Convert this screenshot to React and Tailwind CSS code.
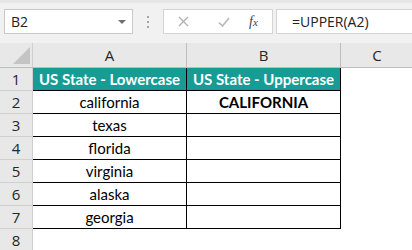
const states = ['california', 'texas', 'florida', 'virginia', 'alaska', 'georgia'];

const RowHead = ({ n }) => (
  <div className="w-[33px] h-[23px] shrink-0 flex items-center justify-center bg-[#e8e8e8] border-r border-b border-[#cfcfcf] text-[15px] text-[#262626] font-['Open_Sans',sans-serif]">
    {n}
  </div>
);

const Toolbar = () => (
  <div className="h-[43px] bg-[#f1f1f1] border-t-[3px] border-[#e6e6e6] flex items-start pt-[6px]">
    <div className="ml-[4px] w-[129px] h-[25px] bg-white border border-[#c8c8c8] flex items-center justify-between pl-[6px] pr-[6px]">
      <span className="text-[14px] text-[#222] font-['Open_Sans',sans-serif]">B2</span>
      <svg width="8" height="4" viewBox="0 0 8 4"><path d="M0 0h8L4 4z" fill="#707070" /></svg>
    </div>
    <div className="w-[30px] h-[25px] flex flex-col items-center justify-center gap-[3px]">
      <span className="w-[2px] h-[2px] bg-[#a5a5a5]" />
      <span className="w-[2px] h-[2px] bg-[#a5a5a5]" />
      <span className="w-[2px] h-[2px] bg-[#a5a5a5]" />
    </div>
    <div className="w-[110px] h-[25px] bg-white border border-[#d4d4d4] flex items-center">
      <svg className="ml-[14px]" width="11" height="11" viewBox="0 0 11 11">
        <path d="M1 1l9 9M10 1l-9 9" stroke="#b0b0b0" strokeWidth="1.3" />
      </svg>
      <svg className="ml-[29px]" width="12" height="10" viewBox="0 0 12 10">
        <path d="M1 5.5l3.5 3.5L11 1" stroke="#b8b8b8" strokeWidth="1.6" fill="none" />
      </svg>
      <span className="ml-[19px] text-[14px] italic text-[#444] font-['Liberation_Serif',serif]">
        f<span className="text-[11px]">x</span>
      </span>
    </div>
    <div className="ml-[3px] flex-1 h-[25px] bg-white border-y border-l border-[#d4d4d4] flex items-center pl-[15px]">
      <span className="text-[14px] text-[#222] font-['Open_Sans',sans-serif]">=UPPER(A2)</span>
    </div>
  </div>
);

const ColHead = () => (
  <div className="flex h-[25px] bg-[#e8e8e8] border-b border-[#bdbdbd] font-['Open_Sans',sans-serif] text-[15px] text-[#262626]">
    <div className="w-[33px] shrink-0 border-r border-[#cfcfcf] flex items-end justify-end pr-[2px] pb-[3px]">
      <svg width="17" height="17" viewBox="0 0 17 17"><path d="M17 0v17H0z" fill="#c4c4c4" /></svg>
    </div>
    <div className="w-[154px] shrink-0 border-r border-[#bdbdbd] flex items-center justify-center">A</div>
    <div className="w-[154px] shrink-0 border-r border-[#bdbdbd] flex items-center justify-center">B</div>
    <div className="flex-1 flex items-center justify-center">
      <span className="w-[72px] text-center">C</span>
    </div>
  </div>
);

export default function App() {
  return (
    <div className="w-[412px] h-[250px] overflow-hidden bg-white">
      <Toolbar />
      <ColHead />
      <div className="font-['Lato',sans-serif] text-[15px] text-black">
        <div className="flex">
          <RowHead n={1} />
          <div className="w-[154px] h-[23px] shrink-0 bg-[#179b95] border-r border-b border-black flex items-center justify-center text-white font-bold">
            US State - Lowercase
          </div>
          <div className="w-[154px] h-[23px] shrink-0 bg-[#179b95] border-r border-b border-black flex items-center justify-center text-white font-bold">
            US State - Uppercase
          </div>
        </div>
        {states.map((s, i) => (
          <div key={s} className="flex">
            <RowHead n={i + 2} />
            <div className="w-[154px] h-[23px] shrink-0 border-r border-b border-black flex items-center justify-center">
              {s}
            </div>
            <div className="w-[154px] h-[23px] shrink-0 border-r border-b border-black flex items-center justify-center font-bold">
              {i === 0 ? 'CALIFORNIA' : ''}
            </div>
          </div>
        ))}
        <div className="flex">
          <RowHead n={8} />
        </div>
      </div>
    </div>
  );
}
